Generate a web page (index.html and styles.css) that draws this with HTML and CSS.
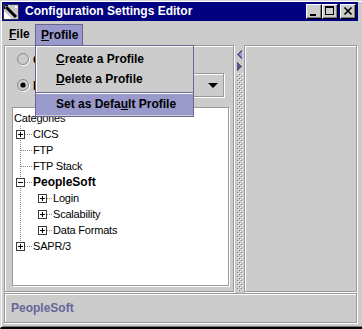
FILE: index.html
```html
<!DOCTYPE html>
<html lang="en">
<head>
<meta charset="utf-8">
<title>Configuration Settings Editor</title>
<link rel="stylesheet" href="styles.css">
</head>
<body>
<div class="window">
  <div class="caption">
    <svg class="app-icon" width="16" height="16" viewBox="0 0 16 16">
      <rect x="0.5" y="0.5" width="15" height="15" fill="#c8c8c8" stroke="#30305a"/>
      <path d="M1 15 L1 7 L9 15 Z" fill="#ffffff"/>
      <path d="M3 3 L13 13" stroke="#000" stroke-width="3"/>
      <path d="M1.5 5 L1.5 1.5 L5 1.5" stroke="#000" fill="none"/>
      <rect x="12" y="2" width="2" height="2" fill="#fff"/>
    </svg>
    <span class="title">Configuration Settings Editor</span>
    <div class="cbtn min"><svg width="14" height="13" viewBox="0 0 14 13"><rect x="3" y="9" width="6" height="2" fill="#000"/></svg></div>
    <div class="cbtn max"><svg width="14" height="13" viewBox="0 0 14 13" shape-rendering="crispEdges"><rect x="2.5" y="1.5" width="8" height="8" fill="none" stroke="#000"/><line x1="2" y1="2.5" x2="11" y2="2.5" stroke="#000"/></svg></div>
    <div class="cbtn close"><svg width="14" height="13" viewBox="0 0 14 13"><path d="M3.5 2.5 L10.5 9.5 M10.5 2.5 L3.5 9.5" stroke="#000" stroke-width="1.7"/></svg></div>
  </div>

  <div class="menubar">
    <span class="menu-item file"><u>F</u>ile</span>
    <span class="menu-item profile open"><u>P</u>rofile</span>
  </div>

  <div class="main">
    <div class="left etched">
      <div class="radio-row first">
        <svg class="radio" width="13" height="13" viewBox="0 0 13 13"><circle cx="7" cy="7" r="5.5" fill="none" stroke="#fff"/><circle cx="6" cy="6" r="5.5" fill="#cccccc" stroke="#8a8a8a"/></svg>
        <span class="radio-label">Current</span>
      </div>
      <div class="radio-row second">
        <svg class="radio" width="13" height="13" viewBox="0 0 13 13"><circle cx="7" cy="7" r="5.5" fill="none" stroke="#fff"/><circle cx="6" cy="6" r="5.5" fill="#cccccc" stroke="#8a8a8a"/><circle cx="6" cy="6" r="2.6" fill="#000"/></svg>
        <span class="radio-label">Profile</span>
        <div class="combo etched">
          <svg class="combo-arrow" width="10" height="5" viewBox="0 0 10 5"><path d="M0 0 L10 0 L5 5 Z" fill="#000"/></svg>
        </div>
      </div>
      <div class="tree">
        <div class="row root"><span class="node">Categories</span></div>
        <div class="row">
          <svg class="h1" width="20" height="16" viewBox="0 0 20 16" shape-rendering="crispEdges"><line x1="7.5" y1="0" x2="7.5" y2="16" class="dot"/><line x1="12" y1="8.5" x2="20" y2="8.5" class="dot"/><rect x="3.5" y="4.5" width="8" height="8" class="box"/><line x1="5" y1="8.5" x2="10" y2="8.5" class="sign"/><line x1="7.5" y1="6" x2="7.5" y2="11" class="sign"/></svg>
          <span class="node">CICS</span>
        </div>
        <div class="row">
          <svg class="h1" width="20" height="16" viewBox="0 0 20 16" shape-rendering="crispEdges"><line x1="7.5" y1="0" x2="7.5" y2="16" class="dot"/><line x1="8" y1="8.5" x2="20" y2="8.5" class="dot"/></svg>
          <span class="node">FTP</span>
        </div>
        <div class="row">
          <svg class="h1" width="20" height="16" viewBox="0 0 20 16" shape-rendering="crispEdges"><line x1="7.5" y1="0" x2="7.5" y2="16" class="dot"/><line x1="8" y1="8.5" x2="20" y2="8.5" class="dot"/></svg>
          <span class="node">FTP Stack</span>
        </div>
        <div class="row">
          <svg class="h1" width="20" height="16" viewBox="0 0 20 16" shape-rendering="crispEdges"><line x1="7.5" y1="0" x2="7.5" y2="16" class="dot"/><line x1="12" y1="8.5" x2="20" y2="8.5" class="dot"/><rect x="3.5" y="4.5" width="8" height="8" class="box"/><line x1="5" y1="8.5" x2="10" y2="8.5" class="sign"/></svg>
          <span class="node bold">PeopleSoft</span>
        </div>
        <div class="row">
          <svg class="h2" width="40" height="16" viewBox="0 0 40 16" shape-rendering="crispEdges"><line x1="7.5" y1="0" x2="7.5" y2="16" class="dot"/><line x1="34" y1="8.5" x2="40" y2="8.5" class="dot"/><rect x="25.5" y="4.5" width="8" height="8" class="box"/><line x1="27" y1="8.5" x2="32" y2="8.5" class="sign"/><line x1="29.5" y1="6" x2="29.5" y2="11" class="sign"/></svg>
          <span class="node">Login</span>
        </div>
        <div class="row">
          <svg class="h2" width="40" height="16" viewBox="0 0 40 16" shape-rendering="crispEdges"><line x1="7.5" y1="0" x2="7.5" y2="16" class="dot"/><line x1="34" y1="8.5" x2="40" y2="8.5" class="dot"/><rect x="25.5" y="4.5" width="8" height="8" class="box"/><line x1="27" y1="8.5" x2="32" y2="8.5" class="sign"/><line x1="29.5" y1="6" x2="29.5" y2="11" class="sign"/></svg>
          <span class="node">Scalability</span>
        </div>
        <div class="row">
          <svg class="h2" width="40" height="16" viewBox="0 0 40 16" shape-rendering="crispEdges"><line x1="7.5" y1="0" x2="7.5" y2="16" class="dot"/><line x1="34" y1="8.5" x2="40" y2="8.5" class="dot"/><rect x="25.5" y="4.5" width="8" height="8" class="box"/><line x1="27" y1="8.5" x2="32" y2="8.5" class="sign"/><line x1="29.5" y1="6" x2="29.5" y2="11" class="sign"/></svg>
          <span class="node">Data Formats</span>
        </div>
        <div class="row">
          <svg class="h1" width="20" height="16" viewBox="0 0 20 16" shape-rendering="crispEdges"><line x1="7.5" y1="0" x2="7.5" y2="9" class="dot"/><line x1="12" y1="8.5" x2="20" y2="8.5" class="dot"/><rect x="3.5" y="4.5" width="8" height="8" class="box"/><line x1="5" y1="8.5" x2="10" y2="8.5" class="sign"/><line x1="7.5" y1="6" x2="7.5" y2="11" class="sign"/></svg>
          <span class="node">SAPR/3</span>
        </div>
      </div>
    </div>

    <div class="divider">
      <svg width="10" height="247" viewBox="0 0 10 247" shape-rendering="crispEdges">
        <defs>
          <pattern id="bumps" x="0" y="0" width="4" height="4" patternUnits="userSpaceOnUse">
            <rect x="0" y="0" width="1" height="1" fill="#ffffff"/>
            <rect x="1" y="1" width="1" height="1" fill="#7a7a7a"/>
            <rect x="2" y="2" width="1" height="1" fill="#ffffff"/>
            <rect x="3" y="3" width="1" height="1" fill="#7a7a7a"/>
          </pattern>
        </defs>
        <polygon points="8,5 3,9.5 8,14" fill="#55558a"/>
        <polygon points="8,7 5,9.5 8,12" fill="#9999cc"/>
        <polygon points="3,17 8,21.5 3,26" fill="#55558a"/>
        <rect x="3" y="28" width="6" height="218" fill="url(#bumps)"/>
      </svg>
    </div>

    <div class="right etched"></div>
  </div>

  <div class="status etched"><span class="status-text">PeopleSoft</span></div>

  <div class="dropdown">
    <div class="dd-item"><u>C</u>reate a Profile</div>
    <div class="dd-item"><u>D</u>elete a Profile</div>
    <div class="dd-sep"></div>
    <div class="dd-item selected">Set as Defa<u>u</u>lt Profile</div>
  </div>
</div>
</body>
</html>
```

FILE: styles.css
```css
* {
  box-sizing: border-box;
}

html,
body {
  margin: 0;
  padding: 0;
}

body {
  width: 362px;
  height: 329px;
  overflow: hidden;
  background: #cccccc;
  font-family: "Liberation Sans", Arial, sans-serif;
  color: #000;
}

.window {
  position: relative;
  width: 362px;
  height: 329px;
  display: flex;
  flex-direction: column;
  background: #cccccc;
  border-top: 1px solid #d8d8d8;
  border-left: 1px solid #d8d8d8;
  border-bottom: 2px solid #000;
  box-shadow: inset 1px 1px #ffffff, inset 0 -1px #7a7a7a;
  padding: 1px 4px 4px 1px;
}

/* ---------- title bar ---------- */
.caption {
  flex: none;
  height: 19px;
  display: flex;
  align-items: flex-start;
  background: #000080;
  padding-right: 2px;
}

.app-icon {
  flex: none;
  margin: 2px 0 0 1px;
}

.title {
  margin-left: 6px;
  color: #fff;
  font-weight: bold;
  font-size: 12px;
  line-height: 19px;
  white-space: nowrap;
}

.cbtn {
  flex: none;
  width: 16px;
  height: 15px;
  margin-top: 2px;
  background: #cccccc;
  border-top: 1px solid #ffffff;
  border-left: 1px solid #ffffff;
  border-right: 1px solid #000;
  border-bottom: 1px solid #000;
  box-shadow: inset -1px -1px #808080;
}

.cbtn svg {
  display: block;
}

.cbtn.min {
  margin-left: auto;
}

.cbtn.close {
  margin-left: 2px;
}

/* ---------- menu bar ---------- */
.menubar {
  flex: none;
  height: 24px;
  display: flex;
  align-items: flex-start;
  font-size: 12px;
  font-weight: bold;
}

.menu-item {
  height: 21px;
  margin-top: 3px;
  line-height: 20px;
  white-space: nowrap;
}

.menu-item.file {
  width: 33px;
  padding-left: 7px;
}

.menu-item.profile {
  width: 48px;
  padding-left: 5px;
}

.menu-item.open {
  background: #9999cc;
  border: 1px solid #66668f;
  border-bottom: none;
}

/* ---------- main split area ---------- */
.main {
  flex: none;
  height: 247px;
  display: flex;
  padding: 0 1px 0 2px;
}

.etched {
  border: 1px solid #999999;
  box-shadow: inset 1px 1px #ffffff, 1px 1px #ffffff;
}

.left {
  flex: none;
  width: 230px;
  display: flex;
  flex-direction: column;
  padding: 0 4px 0 7px;
}

.radio-row {
  flex: none;
  display: flex;
  align-items: center;
}

.radio-row.first {
  height: 27px;
}

.radio-row.second {
  height: 25px;
}

.radio {
  flex: none;
  margin-left: 5px;
}

.radio-label {
  margin-left: 3px;
  font-size: 12px;
  font-weight: bold;
  white-space: nowrap;
}

.combo {
  flex: none;
  align-self: flex-start;
  width: 110px;
  height: 24px;
  margin-left: auto;
  margin-right: 5px;
  display: flex;
  align-items: center;
  justify-content: flex-end;
  padding: 0 5px 0 4px;
}

.combo-arrow {
  flex: none;
  display: block;
}

.tree {
  flex: none;
  height: 179px;
  margin-top: 9px;
  padding-top: 2px;
  background: #ffffff;
  border: 1px solid #999999;
  box-shadow: 1px 1px #ffffff;
  font-size: 11px;
  letter-spacing: -0.2px;
}

.row {
  height: 16px;
  display: flex;
  align-items: center;
}

.row svg {
  flex: none;
  display: block;
}

.row.root {
  padding-left: 1px;
}

.node {
  line-height: 16px;
  white-space: nowrap;
}

.node.bold {
  font-weight: bold;
  font-size: 12px;
  letter-spacing: 0;
}

.dot {
  stroke: #8a8a8a;
  stroke-dasharray: 1 1;
}

.box {
  fill: #ffffff;
  stroke: #3a3a3a;
}

.sign {
  stroke: #000;
}

.divider {
  flex: none;
  width: 10px;
}

.divider svg {
  display: block;
}

.right {
  flex: 1;
}

/* ---------- status bar ---------- */
.status {
  flex: none;
  height: 30px;
  margin: 1px 1px 0 2px;
  display: flex;
  align-items: center;
  padding-left: 6px;
}

.status-text {
  color: #666699;
  font-size: 12px;
  font-weight: bold;
}

/* ---------- open popup menu ---------- */
.dropdown {
  position: absolute;
  left: 34px;
  top: 44px;
  width: 159px;
  height: 72px;
  background: #cccccc;
  border: 1px solid #66668f;
  box-shadow: inset 1px 1px #ffffff;
  padding: 3px 0 1px 0;
  font-size: 12px;
  font-weight: bold;
}

.dd-item {
  height: 20px;
  line-height: 20px;
  padding-left: 20px;
  white-space: nowrap;
}

.dd-item.selected {
  height: 21px;
  line-height: 21px;
  background: #9999cc;
}

.dd-sep {
  height: 5px;
  border-bottom: 1px solid #ffffff;
  box-shadow: inset 0 -1px #66668f;
}
```
